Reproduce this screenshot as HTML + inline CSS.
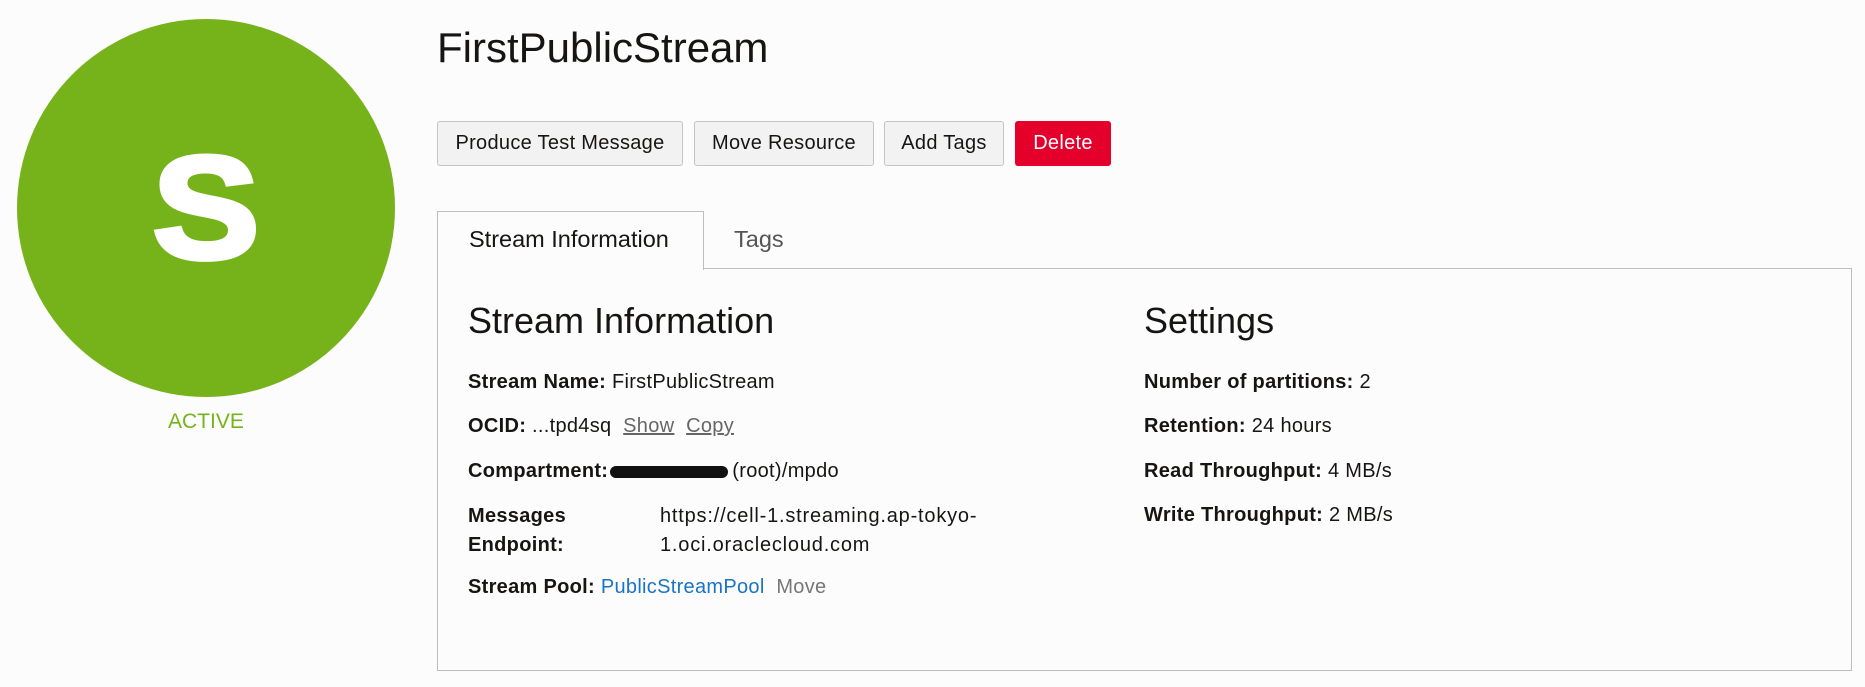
<!DOCTYPE html>
<html><head><meta charset="utf-8"><style>
body{margin:0;width:1865px;height:687px;background:#fcfcfc;font-family:"Liberation Sans",Arial,sans-serif;color:#161513;position:relative;overflow:hidden}
.a{position:absolute;white-space:nowrap}
.circle{position:absolute;left:17px;top:19px;width:378px;height:378px;border-radius:50%;background:#76b31b}
.S{position:absolute;left:0;width:378px;top:116px;text-align:center;color:#fff;font-weight:900;font-size:146px;line-height:146px;-webkit-text-stroke:5px #fff;transform:scaleX(1.1)}
.btn{position:absolute;top:121px;height:43px;border:1px solid #c4c4c4;border-radius:3px;background:#f2f2f2;font-size:20px;letter-spacing:0.3px;line-height:43px;text-align:center;color:#161513}
.lbl{font-weight:bold}
.r{font-size:20px;letter-spacing:0.3px}
.v{letter-spacing:0.8px}
</style></head><body>
<div class="circle"><div class="S">S</div></div>
<div class="a" style="left:168px;top:410px;font-size:21px;color:#76b31b">ACTIVE</div>
<div class="a" style="left:437px;top:24px;font-size:42px">FirstPublicStream</div>
<div class="btn" style="left:437px;width:244px">Produce Test Message</div>
<div class="btn" style="left:694px;width:178px">Move Resource</div>
<div class="btn" style="left:884px;width:118px">Add Tags</div>
<div class="btn" style="left:1015px;width:94px;background:#e4002b;border-color:#e4002b;color:#fff">Delete</div>
<div class="a" style="left:437px;top:268px;width:1413px;height:401px;border:1px solid #bdbdbd;background:#fcfcfc"></div>
<div class="a" style="left:437px;top:211px;width:265px;height:58px;border:1px solid #bdbdbd;border-bottom:none;background:#fcfcfc"></div>
<div class="a" style="left:469px;top:226px;font-size:23.5px">Stream Information</div>
<div class="a" style="left:734px;top:226px;font-size:23.5px;color:#555">Tags</div>
<div class="a" style="left:468px;top:300px;font-size:36px">Stream Information</div>
<div class="a" style="left:1144px;top:300px;font-size:36px">Settings</div>
<div class="a r" style="left:468px;top:371px"><span class="lbl">Stream Name:</span> FirstPublicStream</div>
<div class="a r" style="left:468px;top:415px"><span class="lbl">OCID:</span> ...tpd4sq &nbsp;<span style="color:#666;text-decoration:underline">Show</span>&nbsp;&nbsp;<span style="color:#666;text-decoration:underline">Copy</span></div>
<div class="a r" style="left:468px;top:460px"><span class="lbl">Compartment:</span><span style="display:inline-block;width:118px;height:12px;background:#111;border-radius:6px;vertical-align:-1px;margin:0 4px 0 2px"></span>(root)/mpdo</div>
<div class="a r" style="left:468px;top:502px;line-height:29px" ><span class="lbl">Messages<br>Endpoint:</span></div>
<div class="a r v" style="left:660px;top:502px;line-height:29px">https://cell-1.streaming.ap-tokyo-<br>1.oci.oraclecloud.com</div>
<div class="a r" style="left:468px;top:576px"><span class="lbl">Stream Pool:</span> <span style="color:#1a73c8">PublicStreamPool</span>&nbsp; <span style="color:#777">Move</span></div>
<div class="a r" style="left:1144px;top:371px"><span class="lbl">Number of partitions:</span> 2</div>
<div class="a r" style="left:1144px;top:415px"><span class="lbl">Retention:</span> 24 hours</div>
<div class="a r" style="left:1144px;top:460px"><span class="lbl">Read Throughput:</span> 4 MB/s</div>
<div class="a r" style="left:1144px;top:504px"><span class="lbl">Write Throughput:</span> 2 MB/s</div>
</body></html>
